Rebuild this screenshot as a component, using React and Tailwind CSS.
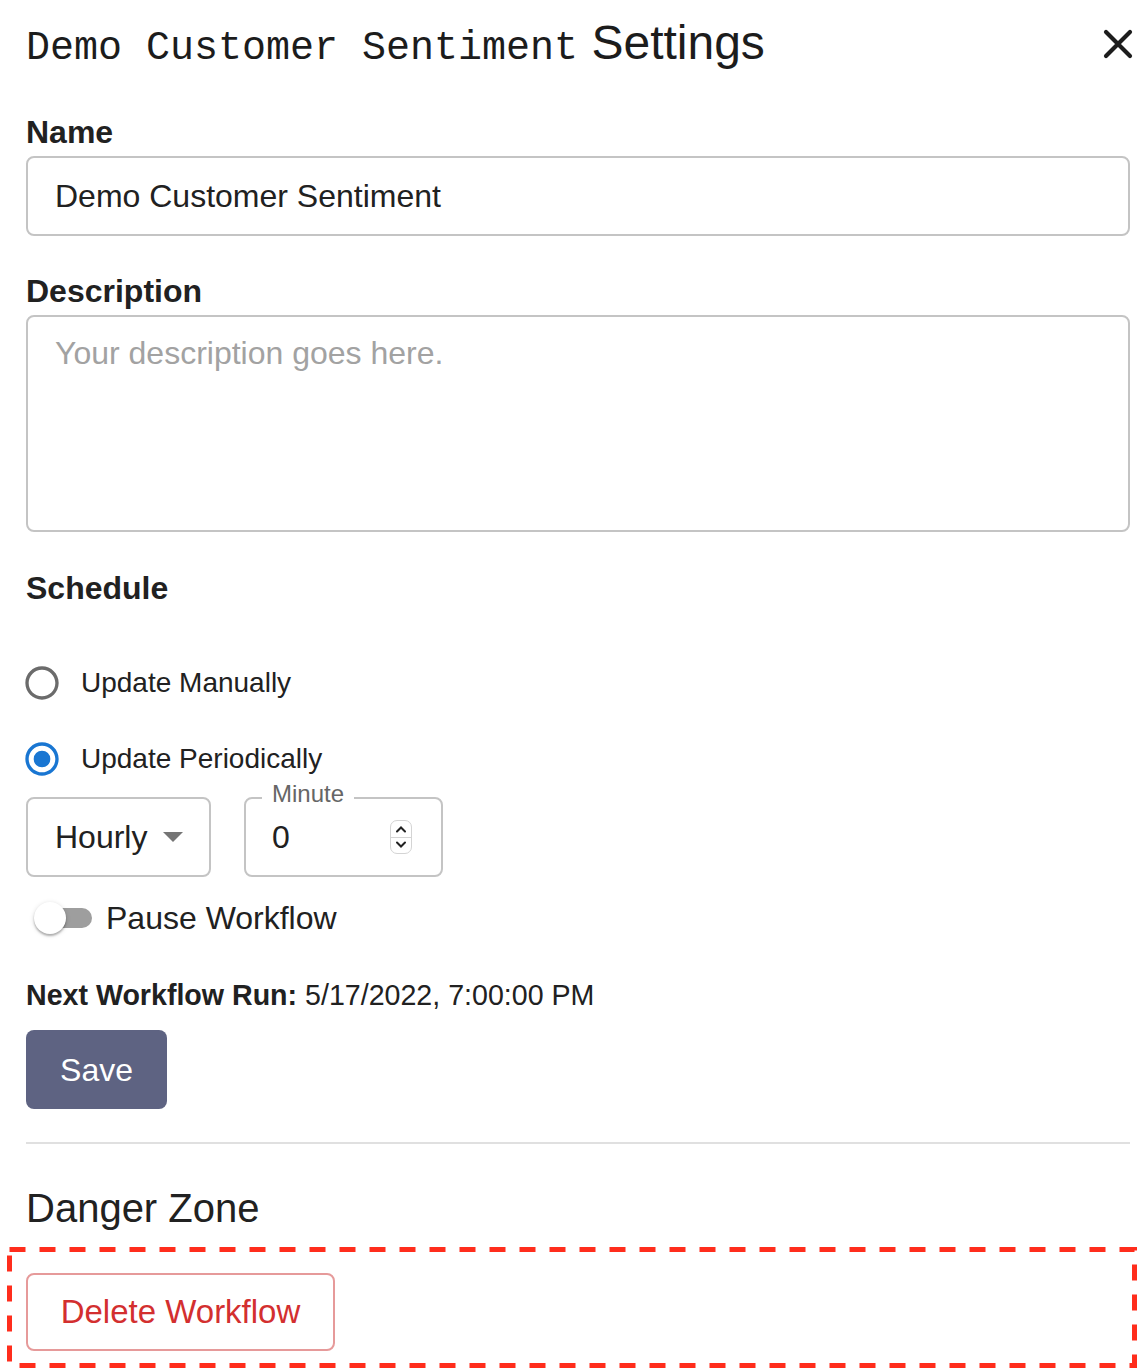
import { useState } from "react";

const RadioIcon = ({ checked }) => (
  <svg viewBox="0 0 24 24" className="w-10 h-10 -ml-1 shrink-0">
    <path
      fill={checked ? "#1976d2" : "#6b6b6b"}
      d="M12 2C6.48 2 2 6.48 2 12s4.48 10 10 10 10-4.48 10-10S17.52 2 12 2zm0 18c-4.42 0-8-3.58-8-8s3.58-8 8-8 8 3.58 8 8-3.58 8-8 8z"
    />
    {checked && <circle cx="12" cy="12" r="5" fill="#1976d2" />}
  </svg>
);

const Stepper = () => (
  <div className="w-[22px] h-[34px] rounded-[7px] border border-[#d4d4d4] flex flex-col overflow-hidden">
    <div className="flex-1 flex items-center justify-center border-b border-[#d4d4d4]">
      <svg width="12" height="8" viewBox="0 0 12 8">
        <path d="M2 6.5 6 2.5l4 4" fill="none" stroke="#222" strokeWidth="2" strokeLinecap="round" />
      </svg>
    </div>
    <div className="flex-1 flex items-center justify-center">
      <svg width="12" height="8" viewBox="0 0 12 8">
        <path d="M2 1.5 6 5.5l4-4" fill="none" stroke="#222" strokeWidth="2" strokeLinecap="round" />
      </svg>
    </div>
  </div>
);

export default function App() {
  const [mode, setMode] = useState("periodic");

  return (
    <div className="bg-white min-h-screen pl-[26px] pr-[14px] text-[#212121] font-['Liberation_Sans',Arial,sans-serif]">
      <div className="flex items-center justify-between pt-[11px] h-[75px]">
        <h2 className="h-[64px] text-[48px] leading-[64px] text-[#1c1c1c] whitespace-nowrap">
          <span className="font-['Liberation_Mono','Courier_New',monospace] text-[40px] leading-none">
            Demo Customer Sentiment
          </span>
          <span className="leading-none"> Settings</span>
        </h2>
        <button className="-mr-[3px] mt-[1px]">
          <svg width="30" height="30" viewBox="0 0 30 30">
            <path d="M3 3 27 27M27 3 3 27" stroke="#1c1c1c" strokeWidth="4.2" strokeLinecap="round" />
          </svg>
        </button>
      </div>

      <div className="mt-[33px] text-[32px] leading-[48px] font-bold">Name</div>
      <div className="h-[80px] border-2 border-[#c4c4c4] rounded-[8px] px-[27px] flex items-center text-[32px]">
        Demo Customer Sentiment
      </div>

      <div className="mt-[31px] text-[32px] leading-[48px] font-bold">Description</div>
      <textarea
        placeholder="Your description goes here."
        className="block w-full h-[217px] border-2 border-[#c4c4c4] rounded-[8px] px-[27px] pt-[13px] text-[32px] leading-[46px] resize-none outline-none placeholder:text-[#a2a2a2]"
      />

      <div className="mt-[32px] text-[32px] leading-[48px] font-bold">Schedule</div>

      <div className="mt-[33px]">
        <label className="h-[76px] flex items-center cursor-pointer" onClick={() => setMode("manual")}>
          <RadioIcon checked={mode === "manual"} />
          <span className="ml-[19px] text-[28px]">Update Manually</span>
        </label>
        <label className="h-[76px] flex items-center cursor-pointer" onClick={() => setMode("periodic")}>
          <RadioIcon checked={mode === "periodic"} />
          <span className="ml-[19px] text-[28px]">Update Periodically</span>
        </label>
      </div>

      <div className="flex gap-[33px]">
        <div className="w-[185px] h-[80px] border-2 border-[#c4c4c4] rounded-[8px] pl-[27px] pr-[26px] flex items-center justify-between text-[32px]">
          <span>Hourly</span>
          <svg width="20" height="10" viewBox="0 0 20 10">
            <path d="M0 0h20L10 10z" fill="#757575" />
          </svg>
        </div>
        <div className="relative w-[199px] h-[80px] border-2 border-[#c4c4c4] rounded-[8px] pl-[26px] pr-[29px] flex items-center justify-between text-[32px]">
          <span className="absolute -top-[19px] left-[16px] px-[10px] bg-white text-[24px] leading-[28px] text-[#666]">
            Minute
          </span>
          <span>0</span>
          <Stepper />
        </div>
      </div>

      <div className="mt-[17px] h-[48px] flex items-center">
        <div className="relative w-[80px] h-[48px] shrink-0">
          <div className="absolute left-[14px] top-[14px] w-[52px] h-[20px] rounded-full bg-[#9e9e9e]" />
          <div className="absolute left-[8px] top-[8px] w-[32px] h-[32px] rounded-full bg-white shadow-[0_2px_2px_rgba(0,0,0,0.25),0_1px_5px_rgba(0,0,0,0.15)]" />
        </div>
        <span className="text-[32px]">Pause Workflow</span>
      </div>

      <div className="mt-[32px] text-[28.6px] leading-[42px]">
        <span className="font-bold">Next Workflow Run:</span> 5/17/2022, 7:00:00 PM
      </div>

      <button className="mt-[14px] h-[79px] w-[141px] rounded-[8px] bg-[#5e6382] text-white text-[32px] flex items-center justify-center">
        Save
      </button>

      <div className="mt-[33px] h-[2px] bg-[#e0e0e0]" />

      <div className="mt-[40px] text-[40px] leading-[48px]">Danger Zone</div>

      <div className="relative mt-[15px] -ml-[19px] w-[1130px] h-[121px] pt-[26px] pl-[19px]">
        <svg className="absolute inset-0 pointer-events-none" width="1130" height="121">
          <rect
            x="2.5"
            y="2.5"
            width="1125"
            height="116"
            fill="none"
            stroke="#ff2d1c"
            strokeWidth="5"
            strokeDasharray="16 14"
          />
        </svg>
        <button className="h-[78px] w-[309px] border-2 border-[#e69a9a] rounded-[8px] text-[#d32f2f] text-[33px] flex items-center justify-center">
          Delete Workflow
        </button>
      </div>
    </div>
  );
}
